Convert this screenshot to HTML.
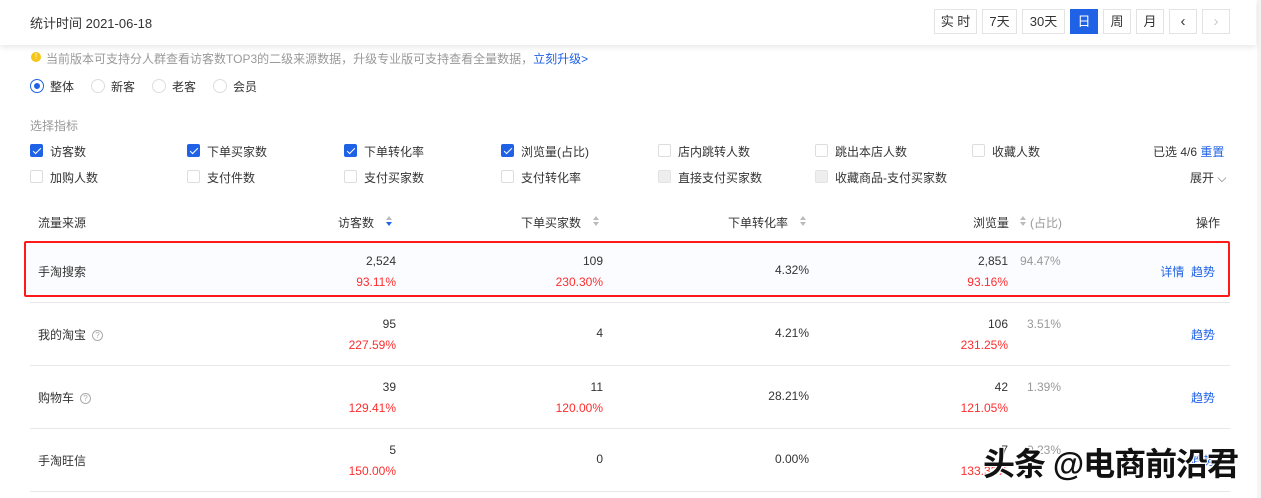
<!DOCTYPE html>
<html><head><meta charset="utf-8"><style>
*{margin:0;padding:0;box-sizing:border-box}
body{width:1261px;height:498px;overflow:hidden;background:#fff;font-family:"Liberation Sans","Noto Sans CJK SC",sans-serif;font-size:12px;color:#333;position:relative}
.a{position:absolute;white-space:nowrap}
.hdr{position:absolute;left:0;top:0;width:1256px;height:45px;background:#fff;box-shadow:0 2px 6px rgba(0,0,0,.1);z-index:2}
.btn{position:absolute;top:9px;height:25px;border:1px solid #e3e3e3;background:#fff;font-size:13px;line-height:23px;text-align:center;color:#333}
.cb{position:absolute;width:13px;height:13px;border:1px solid #ddd;border-radius:2px;background:#fff}
.cb.on{background:#2062e6;border-color:#2062e6}
.cb.on:after{content:"";position:absolute;left:3.5px;top:0.5px;width:3px;height:7px;border:solid #fff;border-width:0 1.5px 1.5px 0;transform:rotate(45deg)}
.cb.dis{background:#eee;border-color:#e3e3e3}
.lbl{position:absolute;font-size:12px;color:#333}
.rd{position:absolute;top:79px;width:14px;height:14px;border:1px solid #ddd;border-radius:50%}
.r{text-align:right}
.red{color:#ff2d2d}
.gray{color:#999}
.blue{color:#2062e6}
.line{position:absolute;left:30px;width:1200px;height:1px;background:#e8e8e8}
.sort{position:absolute;width:6px;height:12px}
.sort:before,.sort:after{content:"";position:absolute;left:0;border-left:3.5px solid transparent;border-right:3.5px solid transparent}
.sort:before{top:0;border-bottom:4px solid #bbb}
.sort:after{top:6px;border-top:4px solid #bbb}
.sort.d:after{border-top-color:#2062e6}
.q{display:inline-block;width:11px;height:11px;border:1px solid #aaa;border-radius:50%;font-size:8px;line-height:9px;text-align:center;color:#aaa;margin-left:6px;vertical-align:1px}
</style></head><body>
<div class="hdr">
<div class="a" style="left:30px;top:13px;font-size:13px">统计时间 2021-06-18</div>
<div class="btn" style="left:934px;width:43px">实 时</div>
<div class="btn" style="left:982px;width:35px">7天</div>
<div class="btn" style="left:1022px;width:43px">30天</div>
<div class="btn" style="left:1070px;width:28px;background:#2062e6;border-color:#2062e6;color:#fff">日</div>
<div class="btn" style="left:1103px;width:28px">周</div>
<div class="btn" style="left:1136px;width:28px">月</div>
<div class="btn" style="left:1169px;width:28px;font-size:15px">‹</div>
<div class="btn" style="left:1202px;width:28px;font-size:15px;color:#ccc">›</div>
</div>
<div class="a" style="left:1257px;top:0;width:4px;height:498px;background:#f5f5f5"></div>
<div class="a" style="left:31px;top:52px;width:10px;height:10px;border-radius:50%;background:#f5c518;color:#fff;font-size:8px;line-height:10px;text-align:center">!</div>
<div class="a gray" style="left:46px;top:50px;font-size:12px">当前版本可支持分人群查看访客数TOP3的二级来源数据，升级专业版可支持查看全量数据，<span class="blue">立刻升级&gt;</span></div>
<div class="rd" style="left:30px;border-color:#2062e6"><div style="position:absolute;left:3px;top:3px;width:6px;height:6px;border-radius:50%;background:#2062e6"></div></div>
<div class="lbl" style="left:50px;top:78px">整体</div>
<div class="rd" style="left:91px"></div><div class="lbl" style="left:111px;top:78px">新客</div>
<div class="rd" style="left:152px"></div><div class="lbl" style="left:172px;top:78px">老客</div>
<div class="rd" style="left:213px"></div><div class="lbl" style="left:233px;top:78px">会员</div>
<div class="a gray" style="left:30px;top:117px">选择指标</div>

<div class="cb on" style="left:30px;top:144px"></div><div class="lbl" style="left:50px;top:143px">访客数</div>
<div class="cb on" style="left:187px;top:144px"></div><div class="lbl" style="left:207px;top:143px">下单买家数</div>
<div class="cb on" style="left:344px;top:144px"></div><div class="lbl" style="left:364px;top:143px">下单转化率</div>
<div class="cb on" style="left:501px;top:144px"></div><div class="lbl" style="left:521px;top:143px">浏览量(占比)</div>
<div class="cb" style="left:658px;top:144px"></div><div class="lbl" style="left:678px;top:143px">店内跳转人数</div>
<div class="cb" style="left:815px;top:144px"></div><div class="lbl" style="left:835px;top:143px">跳出本店人数</div>
<div class="cb" style="left:972px;top:144px"></div><div class="lbl" style="left:992px;top:143px">收藏人数</div>
<div class="lbl" style="left:1153px;top:143px">已选 4/6 <span class="blue">重置</span></div>

<div class="cb" style="left:30px;top:170px"></div><div class="lbl" style="left:50px;top:169px">加购人数</div>
<div class="cb" style="left:187px;top:170px"></div><div class="lbl" style="left:207px;top:169px">支付件数</div>
<div class="cb" style="left:344px;top:170px"></div><div class="lbl" style="left:364px;top:169px">支付买家数</div>
<div class="cb" style="left:501px;top:170px"></div><div class="lbl" style="left:521px;top:169px">支付转化率</div>
<div class="cb dis" style="left:658px;top:170px"></div><div class="lbl" style="left:678px;top:169px">直接支付买家数</div>
<div class="cb dis" style="left:815px;top:170px"></div><div class="lbl" style="left:835px;top:169px">收藏商品-支付买家数</div>
<div class="lbl" style="left:1190px;top:169px">展开 <span style="color:#666">⌵</span></div>

<div class="a" style="left:38px;top:214px">流量来源</div>
<div class="a r" style="right:887px;top:214px">访客数</div><div class="sort d" style="left:386px;top:216px"></div>
<div class="a r" style="right:680px;top:214px">下单买家数</div><div class="sort" style="left:593px;top:216px"></div>
<div class="a r" style="right:473px;top:214px">下单转化率</div><div class="sort" style="left:800px;top:216px"></div>
<div class="a r" style="right:252px;top:214px">浏览量</div><div class="sort" style="left:1020px;top:216px"></div>
<div class="a gray" style="left:1030px;top:214px">(占比)</div>
<div class="a r" style="right:41px;top:214px">操作</div>

<div class="a" style="left:24px;top:241px;width:1206px;height:56px;border:2px solid #ff1a1a;border-radius:2px;background:#fbfcff"></div>
<div class="line" style="top:302px"></div>
<div class="line" style="top:365px"></div>
<div class="line" style="top:428px"></div>
<div class="line" style="top:491px"></div>

<!-- row1 -->
<div class="a" style="left:38px;top:263px">手淘搜索</div>
<div class="a r" style="right:865px;top:254px">2,524</div><div class="a r red" style="right:865px;top:275px">93.11%</div>
<div class="a r" style="right:658px;top:254px">109</div><div class="a r red" style="right:658px;top:275px">230.30%</div>
<div class="a r" style="right:452px;top:263px">4.32%</div>
<div class="a r" style="right:253px;top:254px">2,851</div><div class="a r red" style="right:253px;top:275px">93.16%</div>
<div class="a gray" style="left:1020px;top:254px">94.47%</div>
<div class="a blue r" style="right:46px;top:263px">详情&nbsp; 趋势</div>
<!-- row2 -->
<div class="a" style="left:38px;top:326px">我的淘宝<span class="q">?</span></div>
<div class="a r" style="right:865px;top:317px">95</div><div class="a r red" style="right:865px;top:338px">227.59%</div>
<div class="a r" style="right:658px;top:326px">4</div>
<div class="a r" style="right:452px;top:326px">4.21%</div>
<div class="a r" style="right:253px;top:317px">106</div><div class="a r red" style="right:253px;top:338px">231.25%</div>
<div class="a gray" style="left:1027px;top:317px">3.51%</div>
<div class="a blue r" style="right:46px;top:326px">趋势</div>
<!-- row3 -->
<div class="a" style="left:38px;top:389px">购物车<span class="q">?</span></div>
<div class="a r" style="right:865px;top:380px">39</div><div class="a r red" style="right:865px;top:401px">129.41%</div>
<div class="a r" style="right:658px;top:380px">11</div><div class="a r red" style="right:658px;top:401px">120.00%</div>
<div class="a r" style="right:452px;top:389px">28.21%</div>
<div class="a r" style="right:253px;top:380px">42</div><div class="a r red" style="right:253px;top:401px">121.05%</div>
<div class="a gray" style="left:1027px;top:380px">1.39%</div>
<div class="a blue r" style="right:46px;top:389px">趋势</div>
<!-- row4 -->
<div class="a" style="left:38px;top:452px">手淘旺信</div>
<div class="a r" style="right:865px;top:443px">5</div><div class="a r red" style="right:865px;top:464px">150.00%</div>
<div class="a r" style="right:658px;top:452px">0</div>
<div class="a r" style="right:452px;top:452px">0.00%</div>
<div class="a r" style="right:253px;top:443px">7</div><div class="a r red" style="right:253px;top:464px">133.33%</div>
<div class="a gray" style="left:1027px;top:443px">0.23%</div>
<div class="a blue r" style="right:46px;top:452px">趋势</div>

<div class="a" style="left:983px;top:445px;font-size:32px;line-height:38px;font-weight:bold;color:#111;text-shadow:-1px -1px 0 #fff,1px -1px 0 #fff,-1px 1px 0 #fff,1px 1px 0 #fff;letter-spacing:-1px">头条 @电商前沿君</div>
</body></html>
